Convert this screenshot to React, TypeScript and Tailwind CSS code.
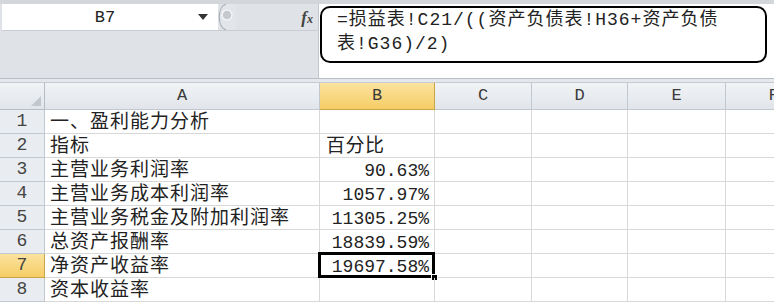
import React from "react";

const font = { fontFamily: '"Liberation Mono", "Noto Sans CJK SC", monospace' };

const rows: { n: number; a: string; b: string; bAlign?: "left" | "right" }[] = [
  { n: 1, a: "一、盈利能力分析", b: "" },
  { n: 2, a: "指标", b: "百分比", bAlign: "left" },
  { n: 3, a: "主营业务利润率", b: "90.63%" },
  { n: 4, a: "主营业务成本利润率", b: "1057.97%" },
  { n: 5, a: "主营业务税金及附加利润率", b: "11305.25%" },
  { n: 6, a: "总资产报酬率", b: "18839.59%" },
  { n: 7, a: "净资产收益率", b: "19697.58%" },
  { n: 8, a: "资本收益率", b: "" },
];

const cols = ["A", "B", "C", "D", "E", "F"];

export default function App() {
  return (
    <div className="w-[774px] h-[302px] overflow-hidden bg-white text-[#222]" style={font}>
      {/* top strip */}
      <div className="h-[4px] bg-[#d3d7dc]" />
      {/* formula bar */}
      <div className="flex h-[75px] border-b border-[#b9bec5]">
        <div className="w-[318px] flex flex-col bg-[#dfe2e6] pl-[2px]">
          <div className="flex h-[26px] items-stretch">
            <div className="w-[216px] bg-white flex items-center">
              <span className="flex-1 text-center text-[17px] pl-[10px] leading-none">B7</span>
              <svg width="10" height="6" viewBox="0 0 10 6" className="mr-[10px]">
                <path d="M0 0 L10 0 L5 6 Z" fill="#333" />
              </svg>
            </div>
            <svg width="20" height="26" viewBox="0 0 20 26" className="-ml-[2px]">
              <path d="M10 0 C1 3 1 23 10 26 L20 26 L20 0 Z" fill="#e2e5e9" />
              <path d="M10 0 C1 3 1 23 10 26" stroke="#a9aeb5" strokeWidth="1.2" fill="none" />
              <circle cx="11" cy="11" r="5" fill="#c6c9ce" stroke="#f3f4f6" strokeWidth="1.5" />
            </svg>
            <div className="flex-1 flex items-center justify-end pr-[5px]">
              <span
                className="text-[17px] font-bold italic text-[#444] leading-none"
                style={{ fontFamily: '"Liberation Serif", serif' }}
              >
                f<span className="text-[12px]">x</span>
              </span>
            </div>
          </div>
          <div className="flex-1 border-t border-[#c9cdd2]" />
        </div>
        <div className="flex-1 bg-white border-l border-[#c4c8ce] pl-[1px] pt-[2px] pr-[7px]">
          <div className="h-[57px] border-2 border-black rounded-[10px] pl-[15px] text-[18px] leading-[24px] tracking-[1px] text-[#222]">
            <div>=损益表!C21/((资产负债表!H36+资产负债</div>
            <div>表!G36)/2)</div>
          </div>
        </div>
      </div>
      {/* separator strip */}
      <div className="h-[4px] bg-[#e4e7eb] border-b border-[#c6cbd1]" />
      {/* grid */}
      <div className="grid grid-cols-[45px_275px_115px_97px_96px_98px_96px] w-[822px]">
        {/* header row */}
        <div className="h-[27px] bg-gradient-to-b from-[#f1f3f6] to-[#e1e5ea] border-r border-b border-[#b7bdc5] flex items-end justify-end p-[3px]">
          <svg width="10" height="10" viewBox="0 0 10 10">
            <path d="M10 0 L10 10 L0 10 Z" fill="#c2c7cd" />
          </svg>
        </div>
        {cols.map((c) => (
          <div
            key={c}
            className={
              c === "B"
                ? "h-[27px] bg-gradient-to-b from-[#fbe39e] to-[#f6cd64] border-r border-b border-[#c9a748] flex items-center justify-center text-[17px] text-[#3a3a3a]"
                : "h-[27px] bg-gradient-to-b from-[#f1f3f6] to-[#e1e5ea] border-r border-b border-[#c2c8cf] flex items-center justify-center text-[17px] text-[#3a3a3a]"
            }
          >
            {c}
          </div>
        ))}
        {rows.map((r) => (
          <React.Fragment key={r.n}>
            <div
              className={
                r.n === 7
                  ? "h-[24px] bg-gradient-to-b from-[#fbe39e] to-[#f6cd64] border-r border-b border-[#c9a748] flex items-center justify-center text-[18px] text-[#444]"
                  : "h-[24px] bg-[#e9ecf0] border-r border-b border-[#c2c8cf] flex items-center justify-center text-[18px] text-[#444]"
              }
            >
              {r.n}
            </div>
            <div className="h-[24px] border-r border-b border-[#d8d8d8] flex items-center pl-[5px] pt-[4px] text-[19px] tracking-[1px] leading-none whitespace-nowrap">
              {r.a}
            </div>
            <div
              className={
                "h-[24px] border-r border-b border-[#d8d8d8] flex items-center leading-none whitespace-nowrap relative " +
                (r.bAlign === "left"
                  ? "justify-start pl-[6px] pt-[4px] text-[19px] tracking-[0.5px]"
                  : "justify-end pr-[5px] pt-[2px] text-[18px]")
              }
            >
              {r.b}
              {r.n === 7 && (
                <>
                  <div className="absolute -left-[2px] -top-[2px] -right-[1px] -bottom-[1px] border-[3px] border-black" />
                  <div className="absolute -right-[4px] -bottom-[4px] w-[7px] h-[7px] bg-black border border-white" />
                </>
              )}
            </div>
            <div className="h-[24px] border-r border-b border-[#d8d8d8]" />
            <div className="h-[24px] border-r border-b border-[#d8d8d8]" />
            <div className="h-[24px] border-r border-b border-[#d8d8d8]" />
            <div className="h-[24px] border-b border-[#d8d8d8]" />
          </React.Fragment>
        ))}
      </div>
    </div>
  );
}
